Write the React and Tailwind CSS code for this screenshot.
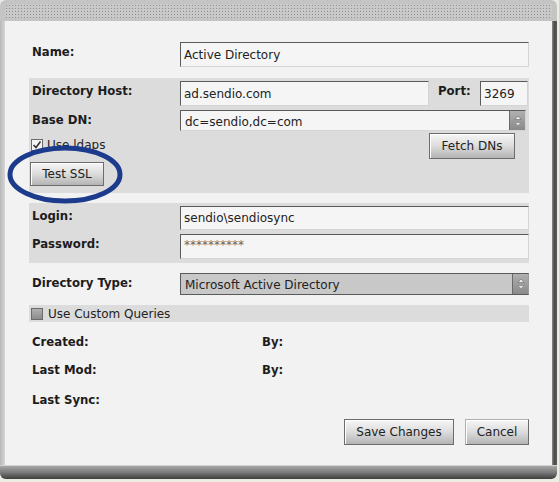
import React from 'react';

const Label = ({ children, className = '' }) => (
  <div className={`font-['DejaVu_Sans_Condensed','DejaVu_Sans',sans-serif] font-bold text-[13px] leading-[15px] text-[#1c1c1c] pt-[2px] ${className}`}>
    {children}
  </div>
);

const Field = ({ value, className = '' }) => (
  <div className={`border border-t-[#5a5a5a] border-l-[#5a5a5a] border-r-[#d4d4d4] border-b-[#d4d4d4] bg-[#f5f5f5] pl-[3px] flex items-center text-[12px] text-[#222] ${className}`}>
    {value}
  </div>
);

const Spinner = ({ className = '' }) => (
  <div className={`w-[16px] h-full flex items-center justify-center border-l border-[#6a6a6a] bg-gradient-to-b from-[#b0b0b0] to-[#8a8a8a] ${className}`}>
    <svg width="8" height="12" viewBox="0 0 8 12">
      <path d="M4 1 L7 4.5 L1 4.5 Z" fill="#f0f0f0" stroke="#555" strokeWidth="0.5" />
      <path d="M4 11 L7 7.5 L1 7.5 Z" fill="#e0e0e0" stroke="#777" strokeWidth="0.5" />
    </svg>
  </div>
);

const Button = ({ children, className = '' }) => (
  <button className={`border border-[#6c6c6c] bg-gradient-to-b from-[#f6f6f6] via-[#dcdcdc] to-[#b4b4b4] text-[12px] text-[#222] flex items-center justify-center shadow-[inset_1px_1px_0_#ffffff] ${className}`}>
    {children}
  </button>
);

const Check = ({ checked }) => (
  <div className={`w-[12px] h-[12px] border border-[#6a6a6a] flex items-center justify-center ${checked ? 'bg-[#f4f4f4]' : 'bg-gradient-to-b from-[#b0b0b0] to-[#8c8c8c]'}`}>
    {checked && (
      <svg width="10" height="10" viewBox="0 0 10 10">
        <path d="M1.5 5 L4 7.5 L8.5 1.5" fill="none" stroke="#333" strokeWidth="1.6" />
      </svg>
    )}
  </div>
);

export default function App() {
  return (
    <div className="w-[559px] h-[482px] bg-[#ecebe4] font-['DejaVu_Sans',sans-serif]">
      <div className="w-[557px] h-[479px] rounded-[6px] overflow-hidden flex flex-col bg-[#c4c4c4]">
        {/* title strip */}
        <div className="h-[21px] pt-[4px] px-[5px] pb-[3px]">
          <div className="h-full bg-[#c9c9c9] bg-[radial-gradient(#8e8e8e_0.8px,transparent_0.9px)] bg-[length:3px_3px]" />
        </div>

        <div className="flex-1 flex">
          <div className="w-[5px] bg-gradient-to-r from-[#b8b8b8] to-[#d6d6d6]" />
          <div className="flex-1 bg-[#f2f2f2] pl-[24px] pr-[23px] flex flex-col">
            {/* Name */}
            <div className="flex mt-[21px]">
              <Label className="w-[151px] pl-[3px]">Name:</Label>
              <Field value="Active Directory" className="flex-1 h-[25px]" />
            </div>

            {/* connection section */}
            <div className="mt-[11px] bg-[#dcdcdc] pt-[3px] pb-[7px]">
              <div className="flex">
                <Label className="w-[151px] pl-[3px]">Directory Host:</Label>
                <Field value="ad.sendio.com" className="w-[249px] h-[25px]" />
                <Label className="ml-[9px] w-[42px]">Port:</Label>
                <Field value="3269" className="w-[48px] h-[25px]" />
              </div>
              <div className="flex mt-[4px]">
                <Label className="w-[151px] pl-[3px]">Base DN:</Label>
                <div className="w-[346px] h-[21px] flex border border-t-[#5a5a5a] border-l-[#5a5a5a] border-r-[#d4d4d4] border-b-[#d4d4d4] bg-[#f5f5f5] text-[12px] text-[#222]">
                  <div className="flex-1 pl-[4px] leading-[22px] overflow-hidden">dc=sendio,dc=com</div>
                  <Spinner />
                </div>
              </div>
              <div className="flex justify-between mt-[2px] pr-[14px]">
                <div className="flex items-center gap-[4px] pl-[2px] mt-[6px] h-[12px] text-[12px] text-[#222]">
                  <Check checked />
                  <span>Use ldaps</span>
                </div>
                <Button className="w-[86px] h-[26px]">Fetch DNs</Button>
              </div>
              <div className="relative mt-[3px] ml-[1px] w-[74px]">
                <Button className="w-[74px] h-[24px]">Test SSL</Button>
                <svg className="absolute left-[-23px] top-[-17px] pointer-events-none" width="116" height="59" viewBox="0 0 116 59">
                  <ellipse cx="58" cy="29.5" rx="55" ry="26.5" fill="none" stroke="#1c3b8c" strokeWidth="5" />
                </svg>
              </div>
            </div>

            {/* credentials */}
            <div className="mt-[10px] bg-[#dcdcdc] pt-[3px] pb-[4px]">
              <div className="flex">
                <Label className="w-[151px] pl-[3px]">Login:</Label>
                <Field value="sendio\sendiosync" className="flex-1 h-[24px]" />
              </div>
              <div className="flex mt-[4px]">
                <Label className="w-[151px] pl-[3px]">Password:</Label>
                <Field value="**********" className="flex-1 h-[25px] items-start pt-[1px] text-[#666]" />
              </div>
            </div>

            {/* type */}
            <div className="flex mt-[10px]">
              <Label className="w-[151px] pl-[3px]">Directory Type:</Label>
              <div className="flex-1 h-[22px] flex border border-t-[#5a5a5a] border-l-[#5a5a5a] border-r-[#9a9a9a] border-b-[#5a5a5a] bg-[#c8c8c8] text-[12px] text-[#222]">
                <div className="flex-1 pl-[4px] leading-[22px]">Microsoft Active Directory</div>
                <Spinner />
              </div>
            </div>

            <div className="mt-[10px] h-[17px] bg-[#dcdcdc] flex items-center gap-[5px] pl-[2px] text-[12px] text-[#222]">
              <Check />
              <span>Use Custom Queries</span>
            </div>

            {/* meta */}
            <div className="flex mt-[10px] h-[18px]">
              <Label className="w-[233px] pl-[3px]">Created:</Label>
              <Label>By:</Label>
            </div>
            <div className="flex mt-[10px] h-[18px]">
              <Label className="w-[233px] pl-[3px]">Last Mod:</Label>
              <Label>By:</Label>
            </div>
            <div className="flex mt-[12px] h-[18px]">
              <Label className="pl-[3px]">Last Sync:</Label>
            </div>

            <div className="flex justify-end gap-[11px] mt-[11px]">
              <Button className="w-[110px] h-[26px]">Save Changes</Button>
              <Button className="w-[64px] h-[26px] border-t-[#b0b0b0] border-l-[#b0b0b0]">Cancel</Button>
            </div>
          </div>
          <div className="w-[5px] bg-gradient-to-r from-[#8a8a8a] via-[#4a4a4a] to-[#5c5c5c]" />
        </div>

        {/* bottom strip */}
        <div className="h-[14px] border-t border-[#d2d2d2] bg-gradient-to-b from-[#a8a8a8] via-[#7a7a7a] to-[#3e3e3e]" />
      </div>
    </div>
  );
}
